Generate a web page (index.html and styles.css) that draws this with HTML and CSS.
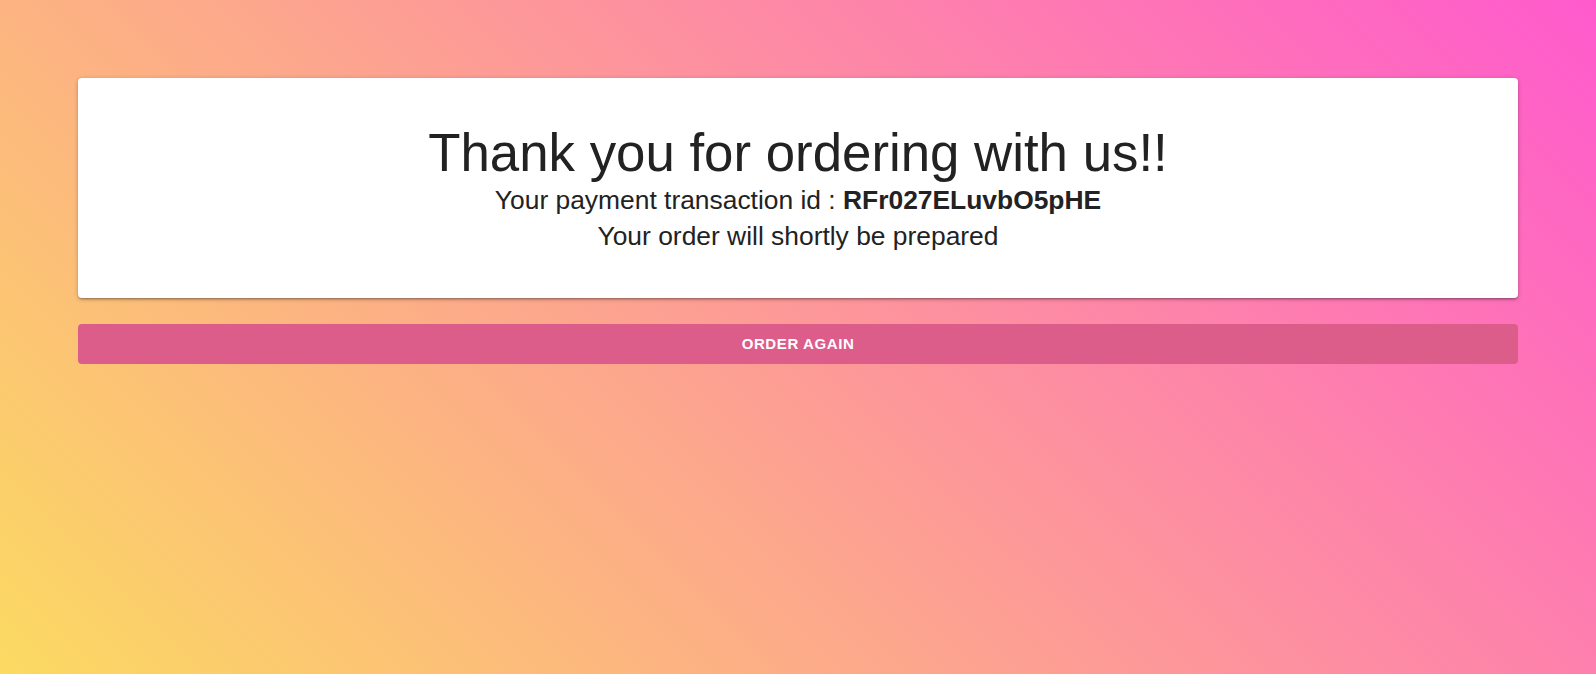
FILE: index.html
```html
<!DOCTYPE html>
<html lang="en">
<head>
<meta charset="utf-8">
<title>Thank you</title>
<link rel="stylesheet" href="styles.css">
</head>
<body>
  <main class="page">
    <section class="card">
      <h1 class="title">Thank you for ordering with us!!</h1>
      <p class="line">Your payment transaction id : <b class="txid">RFr027ELuvbO5pHE</b></p>
      <p class="line">Your order will shortly be prepared</p>
    </section>
    <button class="btn" type="button">Order again</button>
  </main>
</body>
</html>
```
FILE: styles.css
```css
html, body {
  margin: 0;
  padding: 0;
  height: 100%;
}
body {
  font-family: "Liberation Sans", Arial, sans-serif;
  background-color: #FBDA61;
  background-image: linear-gradient(45deg, #FBDA61 0%, #FF5ACD 100%);
  color: #222;
  min-height: 674px;
}
.page {
  padding: 78px 78px 0;
  display: flex;
  flex-direction: column;
  gap: 26px;
}
.card {
  background: #fff;
  border-radius: 4px;
  padding: 43.5px 24px 43.5px;
  text-align: center;
  box-shadow: 0 2px 2px 0 rgba(0,0,0,.14), 0 3px 1px -2px rgba(0,0,0,.12), 0 1px 5px 0 rgba(0,0,0,.2);
}
.title {
  margin: 0;
  font-weight: 400;
  font-size: 52.8px;
  line-height: 61.5px;
  color: #222;
}
.line {
  margin: 0;
  font-size: 26.4px;
  line-height: 35.75px;
  color: #222;
}
.txid {
  font-weight: 700;
}
.btn {
  height: 40px;
  border: none;
  border-radius: 4px;
  background: #dc5c8a;
  color: #fff;
  font-family: "Liberation Sans", Arial, sans-serif;
  font-weight: 700;
  font-size: 15px;
  letter-spacing: 0.6px;
  text-transform: uppercase;
  cursor: pointer;
  padding: 0 0 1px;
}
```
